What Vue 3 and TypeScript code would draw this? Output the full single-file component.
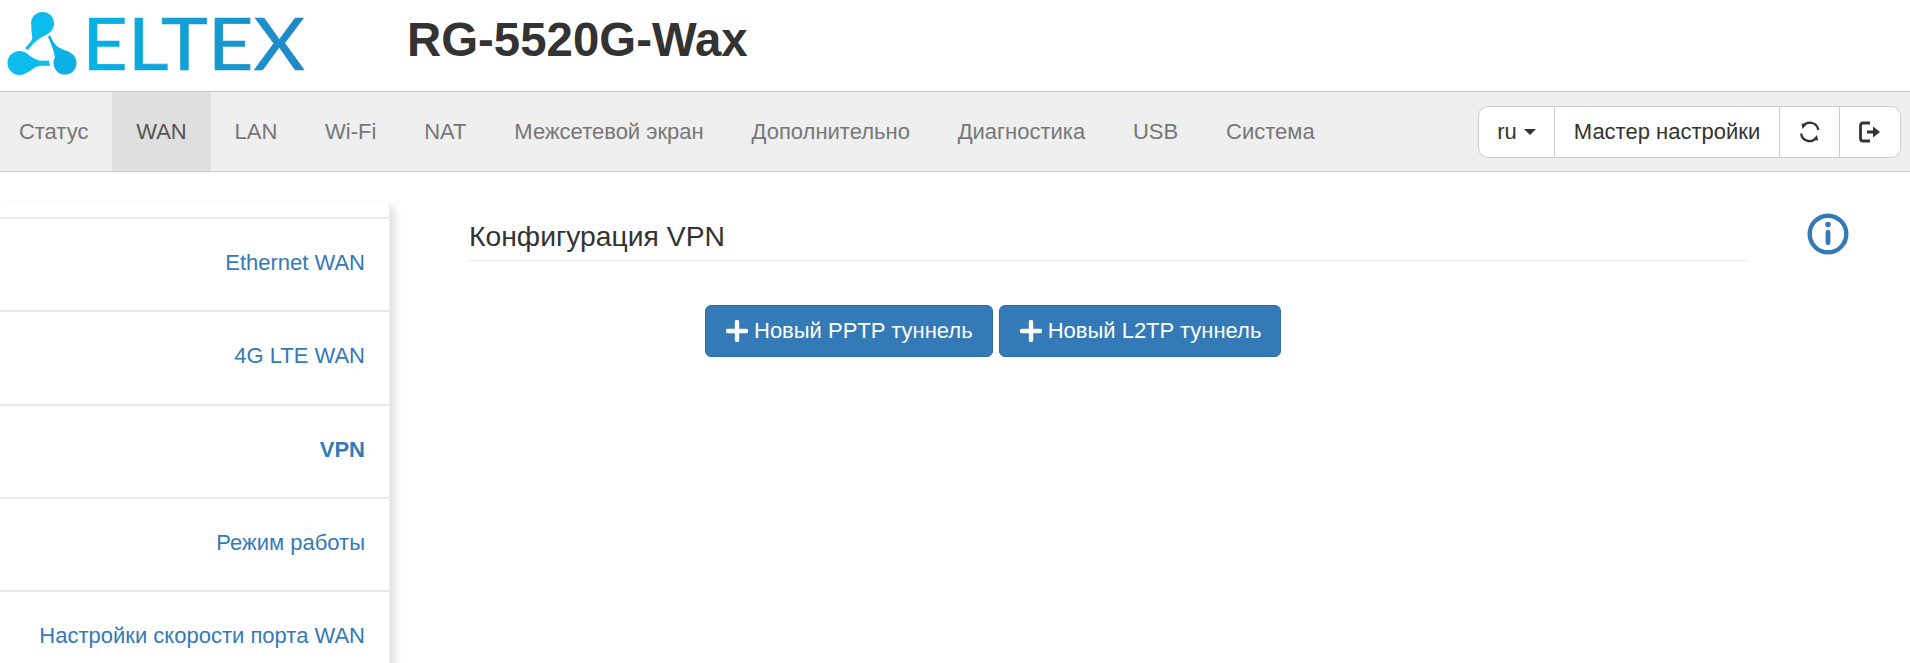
<script setup lang="ts">
const tabs = ['Статус', 'WAN', 'LAN', 'Wi-Fi', 'NAT', 'Межсетевой экран', 'Дополнительно', 'Диагностика', 'USB', 'Система']
const active = 'WAN'
const sideItems = ['Ethernet WAN', '4G LTE WAN', 'VPN', 'Режим работы', 'Настройки скорости порта WAN']
const current = 'VPN'
const buttons = ['Новый PPTP туннель', 'Новый L2TP туннель']
</script>

<template>
  <div class="page">
    <header class="top">
      <svg class="logo" width="320" height="91" viewBox="0 0 320 91" role="img" aria-label="ELTEX">
        <defs>
          <linearGradient id="word" x1="0" x2="1" y1="0" y2="0">
            <stop offset="0" stop-color="#05b3e6" />
            <stop offset="1" stop-color="#2387c4" />
          </linearGradient>
        </defs>
        <g fill="#0cbcec">
          <circle cx="42.5" cy="23.5" r="11.5" />
          <path d="M31.5 27 C31 33 33 36 32 39 C31 42 28 45 25 48 L28 50 C31 46 36 40 42 37 C45 35.5 47 35 50 31 Z" />
          <circle cx="19.5" cy="63" r="12" />
          <path d="M24 52 C28 54 31 57 35 59 C39 61 44 61 49 60.5 L50 66 C44 65.5 39 65.5 36 67 C33 68.5 29 72 26 73 Z" />
        </g>
        <circle cx="65" cy="63" r="11.5" fill="#0db0e4" />
        <path d="M48 37 L50 35 C52 40 54 44 58 47 C62 49 66 51 70 52 L60 74 C57 70 56 64 55 58 C54 50 51 44 48 37 Z" fill="#0db0e4" />
        <text x="82" y="70" class="word" fill="url(#word)" stroke="url(#word)" stroke-width="0.6" textLength="223" lengthAdjust="spacingAndGlyphs">ELTEX</text>
      </svg>
      <h1 class="model">RG-5520G-Wax</h1>
    </header>

    <nav class="navbar">
      <ul class="tabs">
        <li v-for="t in tabs" :key="t" :class="{ on: t === active }">{{ t }}</li>
      </ul>
      <div class="tools">
        <div class="cell lang">ru <span class="caret"></span></div>
        <div class="cell wizard">Мастер настройки</div>
        <div class="cell icon">
          <svg width="22" height="22" viewBox="0 0 22 22" fill="none">
            <path d="M4.2 4.8 A8.6 8.6 0 0 1 19.3 9" stroke="#333" stroke-width="2.2" />
            <path d="M2.5 2.5 L8 3 L3.5 8 Z" fill="#333" />
            <path d="M2.1 12.5 A8.6 8.6 0 0 0 16.8 17.5" stroke="#333" stroke-width="2.2" />
            <path d="M19 19.5 L13.5 19 L18 14 Z" fill="#333" />
          </svg>
        </div>
        <div class="cell icon">
          <svg width="22" height="22" viewBox="0 0 22 22" fill="none">
            <path d="M11 2 H4 Q1.5 2 1.5 4.5 V17.5 Q1.5 20 4 20 H11" stroke="#333" stroke-width="2.8" />
            <path d="M8 9.5 H14 V5.5 L21 11 L14 16.5 V12.5 H8 Z" fill="#333" />
          </svg>
        </div>
      </div>
    </nav>

    <div class="body">
      <aside class="side">
        <ul>
          <li v-for="s in sideItems" :key="s" :class="{ on: s === current }">{{ s }}</li>
        </ul>
      </aside>
      <main class="content">
        <div class="head">
          <h2>Конфигурация VPN</h2>
          <svg class="info" width="42" height="42" viewBox="0 0 42 42">
            <circle cx="21" cy="21" r="18.3" fill="none" stroke="#337ab7" stroke-width="4.4" />
            <circle cx="21" cy="11.5" r="2.8" fill="#337ab7" />
            <rect x="18.6" y="17" width="4.8" height="15" rx="2" fill="#337ab7" />
          </svg>
        </div>
        <div class="actions">
          <button v-for="b in buttons" :key="b" type="button">
            <svg width="22" height="22" viewBox="0 0 22 22">
              <path d="M11 2 V20 M2 11 H20" fill="none" stroke="#fff" stroke-width="4.4" stroke-linecap="round" />
            </svg>
            {{ b }}
          </button>
        </div>
      </main>
    </div>
  </div>
</template>

<style>
html,
body {
  margin: 0;
  background: #fff;
}
</style>

<style scoped>
.page {
  width: 1910px;
  height: 663px;
  overflow: hidden;
  font-family: 'Liberation Sans', Arial, sans-serif;
  font-size: 22px;
  color: #333;
}
.top {
  height: 91px;
  display: flex;
  align-items: center;
}
.logo {
  flex: none;
  margin-right: 87px;
}
.word {
  font-family: Lato, sans-serif;
  font-size: 71px;
}
.model {
  margin: 0 0 11px;
  font-size: 47.4px;
  font-weight: 700;
  line-height: 1;
}
.navbar {
  height: 79px;
  display: flex;
  justify-content: space-between;
  align-items: center;
  background: #efefef;
  border-top: 1px solid #ccc;
  border-bottom: 1px solid #ccc;
}
.tabs {
  list-style: none;
  display: flex;
  align-self: stretch;
  margin: 0 0 0 -5px;
  padding: 0;
}
.tabs li {
  padding: 0 23.9px;
  display: flex;
  align-items: center;
  color: #777;
}
.tabs li.on {
  background: #dfdfdf;
  color: #555;
}
.tools {
  display: flex;
  height: 52px;
  margin-right: 9px;
  background: #fff;
  border: 1px solid #ccc;
  border-radius: 10px;
  box-sizing: border-box;
}
.cell {
  display: flex;
  align-items: center;
  justify-content: center;
  border-left: 1px solid #ccc;
  box-sizing: border-box;
}
.cell:first-child {
  border-left: 0;
}
.lang {
  width: 75px;
  gap: 7px;
}
.caret {
  width: 0;
  height: 0;
  border-top: 6px solid #333;
  border-left: 6px solid transparent;
  border-right: 6px solid transparent;
}
.wizard {
  width: 225px;
}
.icon {
  width: 60px;
}
.icon:last-child {
  width: 61px;
}
.body {
  display: flex;
  align-items: flex-start;
  padding-top: 31px;
}
.side {
  width: 390px;
  flex: none;
  padding-top: 14px;
  background: #fff;
  box-shadow: 4px 4px 8px rgba(0, 0, 0, 0.14);
  border-right: 1px solid #eee;
  box-sizing: border-box;
}
.side ul {
  list-style: none;
  margin: 0;
  padding: 0;
}
.side li {
  height: 93.3px;
  box-sizing: border-box;
  display: flex;
  align-items: center;
  justify-content: flex-end;
  padding: 0 24px 3px 0;
  border-top: 2px solid #e7e7e7;
  color: #337ab7;
}
.side li.on {
  font-weight: 700;
}
.content {
  flex: 1;
  padding: 0 0 0 79px;
}
.head {
  position: relative;
  width: 1278px;
  height: 57px;
  border-bottom: 1px solid #e5e5e5;
  display: flex;
  align-items: flex-end;
}
.head h2 {
  margin: 0 0 6px;
  font-size: 28.3px;
  font-weight: 400;
  line-height: 1.2;
}
.info {
  position: absolute;
  left: 1338px;
  top: 10px;
}
.actions {
  display: flex;
  gap: 6px;
  margin: 44px 0 0 236px;
}
.actions button {
  height: 52px;
  display: flex;
  align-items: center;
  gap: 6px;
  padding: 0 19px 0 20px;
  font: inherit;
  color: #fff;
  background: #337ab7;
  border: 1px solid #2e6da4;
  border-radius: 6px;
}
</style>
